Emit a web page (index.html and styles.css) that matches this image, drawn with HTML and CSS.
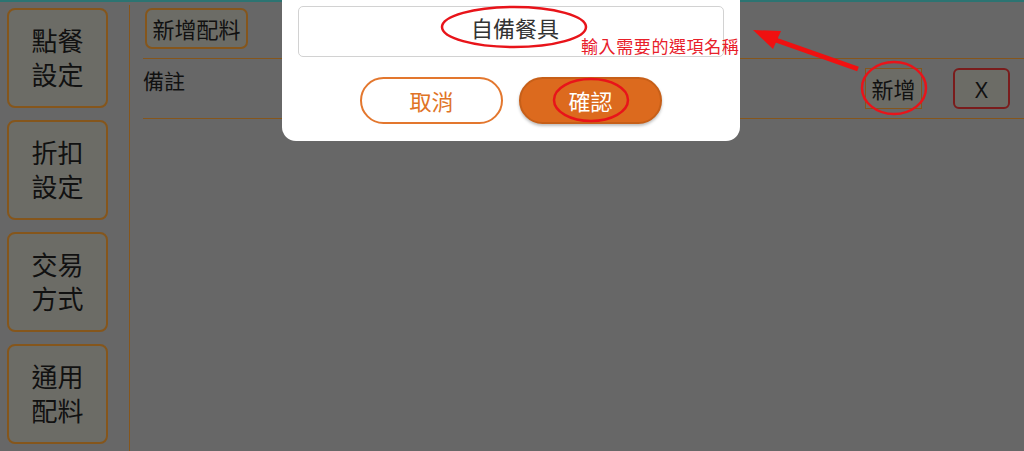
FILE: index.html
```html
<!DOCTYPE html>
<html lang="zh-Hant">
<head>
<meta charset="utf-8">
<title>配料設定</title>
<link rel="stylesheet" href="styles.css">
</head>
<body>
<div class="topline"></div>
<div class="app">
  <nav class="sidebar">
    <div class="side-btn"><span>點餐</span><span>設定</span></div>
    <div class="side-btn"><span>折扣</span><span>設定</span></div>
    <div class="side-btn"><span>交易</span><span>方式</span></div>
    <div class="side-btn"><span>通用</span><span>配料</span></div>
  </nav>
  <main class="main">
    <div class="toolbar">
      <div class="add-btn">新增配料</div>
    </div>
    <div class="row">
      <div class="row-label">備註</div>
      <div class="row-actions">
        <div class="new-btn">新增</div>
        <div class="x-btn">X</div>
      </div>
    </div>
  </main>
</div>

<div class="dialog">
  <div class="input">自備餐具</div>
  <div class="dialog-actions">
    <div class="btn-cancel">取消</div>
    <div class="btn-ok">確認</div>
  </div>
</div>

<div class="hint">輸入需要的選項名稱</div>

<svg class="annot" width="1024" height="451" viewBox="0 0 1024 451">
  <ellipse cx="514" cy="27" rx="72" ry="20" fill="none" stroke="#e8141a" stroke-width="2.5"/>
  <ellipse cx="591" cy="100" rx="37" ry="21" fill="none" stroke="#e8141a" stroke-width="2.5"/>
  <ellipse cx="894" cy="88" rx="32" ry="26" fill="none" stroke="#e8141a" stroke-width="2.5"/>
  <line x1="858" y1="69" x2="770" y2="38" stroke="#f01010" stroke-width="5"/>
  <polygon points="753,30 781,31 773,49" fill="#f01010"/>
</svg>
</body>
</html>
```
FILE: styles.css
```css
* { box-sizing: border-box; }
html, body { margin: 0; padding: 0; }
body {
  width: 1024px;
  height: 451px;
  overflow: hidden;
  background: #676767;
  font-family: "Noto Sans CJK TC", "Noto Sans", sans-serif;
  color: #111;
  position: relative;
}
.topline { height: 2px; background: #2c7472; }
.app { display: flex; height: 449px; }
.sidebar {
  width: 129px;
  flex: none;
  padding: 6px 0 0 7px;
  display: flex;
  flex-direction: column;
  gap: 12px;
}
.side-btn {
  width: 101px;
  height: 100px;
  border: 2px solid #85561c;
  border-radius: 8px;
  background: #6c6c66;
  font-size: 26px;
  display: flex;
  flex-direction: column;
  align-items: center;
  justify-content: center;
  gap: 0;
  padding-bottom: 2px;
}
.side-btn span {
  display: block;
  height: 34px;
  line-height: 34px;
}
.main {
  flex: 1;
  border-left: 1.5px solid #85561c;
  margin-top: 3px;
  padding: 3px 0 0 13px;
}
.toolbar {
  height: 51px;
  padding-left: 2px;
  border-bottom: 1.5px solid #85561c;
}
.add-btn {
  display: inline-block;
  height: 41px;
  width: 103px;
  border: 2px solid #85561c;
  border-radius: 7px;
  background: #6c6c66;
  font-size: 22px;
  line-height: 36px;
  text-align: center;
}
.row {
  height: 60px;
  border-bottom: 1.5px solid #85561c;
  display: flex;
  justify-content: space-between;
  align-items: flex-start;
  padding-right: 14px;
}
.row-label { font-size: 21px; line-height: 26px; padding-top: 8px; }
.row-actions { display: flex; gap: 31px; padding-top: 9px; }
.new-btn {
  width: 57px;
  height: 41px;
  border: 1px solid #85561c;
  background: #6c6c66;
  font-size: 22px;
  line-height: 38px;
  text-align: center;
}
.x-btn {
  width: 57px;
  height: 41px;
  border: 2px solid #7a1c1c;
  border-radius: 6px;
  background: #6c6c66;
  font-size: 22px;
  line-height: 38px;
  text-align: center;
  font-family: "Noto Sans", sans-serif;
}
.dialog {
  position: absolute;
  left: 282px;
  top: 0;
  width: 458px;
  height: 141px;
  background: #fff;
  border-radius: 0 0 14px 14px;
  padding: 6px 16px 0 16px;
}
.input {
  height: 51px;
  border: 1.5px solid #d2d2d2;
  border-radius: 5px;
  font-size: 22px;
  color: #333;
  text-align: center;
  line-height: 40px;
  padding-left: 8px;
}
.dialog-actions {
  display: flex;
  justify-content: center;
  gap: 16px;
  margin-top: 20px;
}
.btn-cancel, .btn-ok {
  width: 143px;
  height: 47px;
  border-radius: 24px;
  font-size: 22px;
  line-height: 42px;
  text-align: center;
}
.btn-cancel {
  border: 2px solid #e3772e;
  color: #e07326;
  background: #fff;
}
.btn-ok {
  border: 2px solid #c75f18;
  background: #dc6a1e;
  color: #fff;
  box-shadow: 0 2px 3px rgba(0,0,0,0.25);
}
.hint {
  position: absolute;
  left: 581px;
  top: 35px;
  font-size: 17px;
  letter-spacing: 0.6px;
  line-height: 22px;
  color: #e8202a;
}
.annot { position: absolute; left: 0; top: 0; pointer-events: none; }
```
